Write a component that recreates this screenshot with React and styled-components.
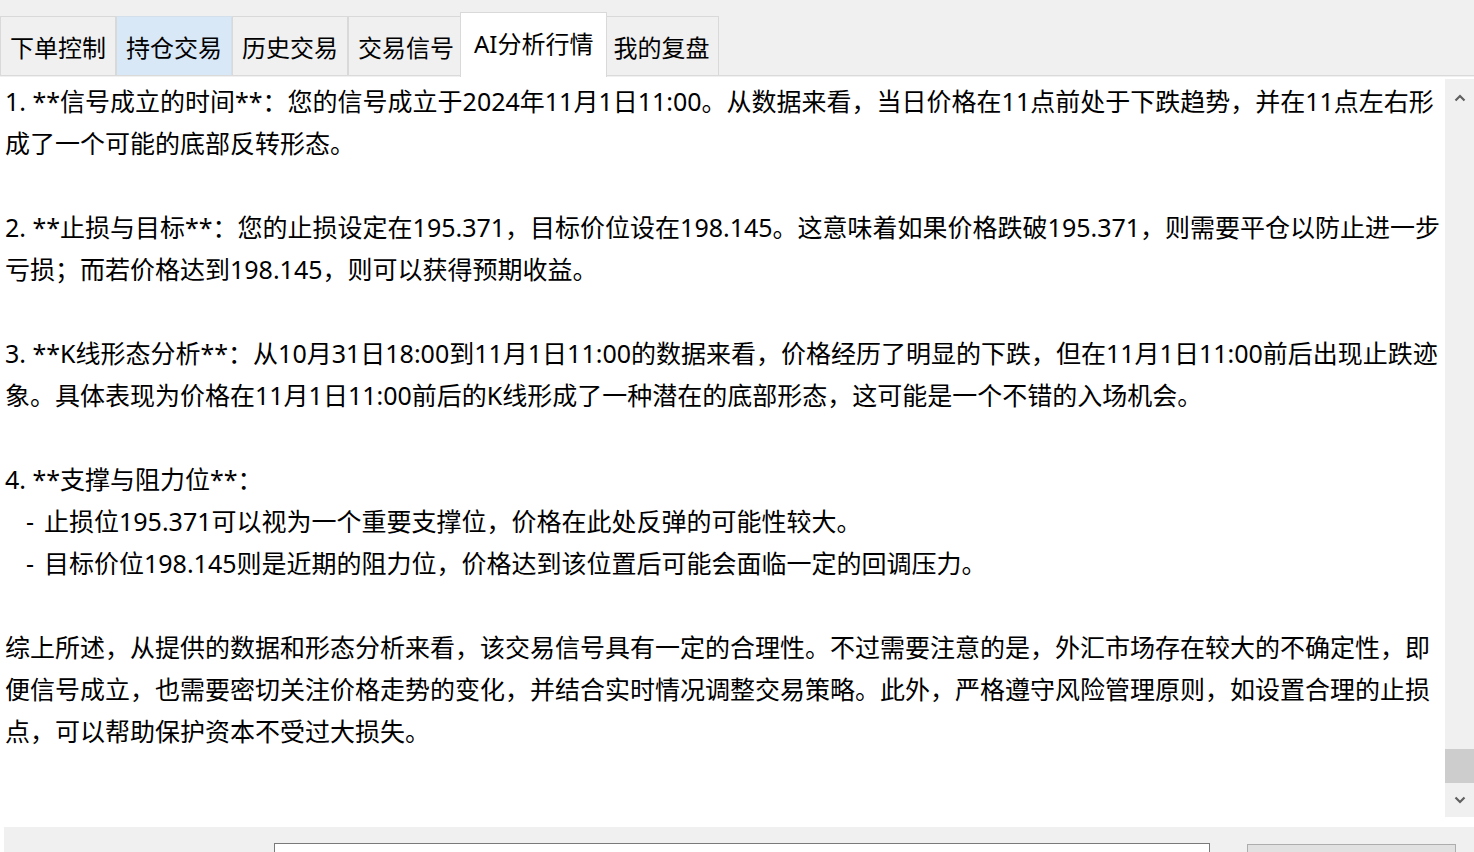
import React from "react";
import styled, { createGlobalStyle } from "styled-components";

const Global = createGlobalStyle`
  html, body { margin: 0; padding: 0; background: #ffffff; }
  body { font-family: "Noto Sans", "Noto Sans CJK SC", sans-serif; overflow: hidden; }
  #root { width: 1474px; height: 852px; }
`;

const Page = styled.div`
  width: 1474px;
  height: 852px;
  display: flex;
  flex-direction: column;
  background: #ffffff;
  overflow: hidden;
  & > * { flex-shrink: 0; }
`;

const TabBar = styled.div`
  height: 77px;
  box-sizing: border-box;
  background: #f0f0f0;
  display: flex;
  align-items: flex-end;
  position: relative;
  &::after {
    content: "";
    position: absolute;
    left: 0;
    right: 0;
    bottom: 1px;
    height: 1px;
    background: #dadada;
  }
`;

const Tab = styled.div`
  position: relative;
  z-index: ${(p) => (p.$active ? 2 : 1)};
  box-sizing: border-box;
  height: ${(p) => (p.$active ? "65px" : "60px")};
  margin: ${(p) => (p.$active ? "0 -4px 0 -4px" : "0 0 1px 0")};
  padding: ${(p) => (p.$active ? "0 13px 6px" : "0 9px")};
  display: flex;
  align-items: center;
  font-size: 24px;
  color: #000;
  white-space: nowrap;
  background: ${(p) => (p.$active ? "#ffffff" : p.$hover ? "#d9e8f6" : "#f0f0f0")};
  border: 1px solid ${(p) => (p.$hover ? "#d3dfeb" : "#d9d9d9")};
  border-bottom: ${(p) => (p.$active ? "none" : "1px solid #dadada")};
  & + & { border-left: ${(p) => (p.$active ? "1px solid #d9d9d9" : "none")}; }
`;

const Body = styled.div`
  height: 740px;
  display: flex;
  background: #ffffff;
`;

const TextArea = styled.div`
  flex: 1;
  padding: 3px 0 0 5px;
  font-size: 25px;
  line-height: 42px;
  color: #000;
  overflow: hidden;
`;

const Line = styled.div`
  white-space: pre;
  height: 42px;
  padding-left: ${(p) => (p.$indent ? "21px" : "0")};
`;

const Dash = styled.span`
  display: inline-block;
  width: 18px;
`;

const ScrollBar = styled.div`
  width: 29px;
  margin-top: 2px;
  background: #f0f0f0;
  display: flex;
  flex-direction: column;
`;

const Arrow = styled.div`
  height: ${(p) => (p.$up ? "38px" : "34px")};
  display: flex;
  align-items: center;
  justify-content: center;
`;

const Track = styled.div`
  flex: 1;
  display: flex;
  flex-direction: column;
  justify-content: flex-end;
`;

const Thumb = styled.div`
  height: 34px;
  background: #cdcdcd;
`;

const Gap = styled.div`
  height: 10px;
  background: #ffffff;
`;

const Bottom = styled.div`
  height: 25px;
  margin-left: 4px;
  background: #f0f0f0;
  display: flex;
  align-items: flex-start;
  padding-top: 16px;
  overflow: hidden;
`;

const Input = styled.div`
  flex-shrink: 0;
  margin-left: 270px;
  width: 936px;
  height: 40px;
  box-sizing: border-box;
  border: 1px solid #7a7a7a;
  background: #ffffff;
`;

const Button = styled.div`
  flex-shrink: 0;
  margin-left: 37px;
  margin-top: 1px;
  width: 209px;
  height: 40px;
  box-sizing: border-box;
  border: 1px solid #adadad;
  background: #e1e1e1;
`;

const lines = [
  "1. **信号成立的时间**：您的信号成立于2024年11月1日11:00。从数据来看，当日价格在11点前处于下跌趋势，并在11点左右形",
  "成了一个可能的底部反转形态。",
  "",
  "2. **止损与目标**：您的止损设定在195.371，目标价位设在198.145。这意味着如果价格跌破195.371，则需要平仓以防止进一步",
  "亏损；而若价格达到198.145，则可以获得预期收益。",
  "",
  "3. **K线形态分析**：从10月31日18:00到11月1日11:00的数据来看，价格经历了明显的下跌，但在11月1日11:00前后出现止跌迹",
  "象。具体表现为价格在11月1日11:00前后的K线形成了一种潜在的底部形态，这可能是一个不错的入场机会。",
  "",
  "4. **支撑与阻力位**：",
  { sub: "止损位195.371可以视为一个重要支撑位，价格在此处反弹的可能性较大。" },
  { sub: "目标价位198.145则是近期的阻力位，价格达到该位置后可能会面临一定的回调压力。" },
  "",
  "综上所述，从提供的数据和形态分析来看，该交易信号具有一定的合理性。不过需要注意的是，外汇市场存在较大的不确定性，即",
  "便信号成立，也需要密切关注价格走势的变化，并结合实时情况调整交易策略。此外，严格遵守风险管理原则，如设置合理的止损",
  "点，可以帮助保护资本不受过大损失。",
];

const tabs = ["下单控制", "持仓交易", "历史交易", "交易信号", "AI分析行情", "我的复盘"];

const Chevron = ({ up }) => (
  <svg width="12" height="8" viewBox="0 0 12 8">
    <path
      d={up ? "M1.5 6.5 L6 2 L10.5 6.5" : "M1.5 1.5 L6 6 L10.5 1.5"}
      fill="none"
      stroke="#606060"
      strokeWidth="2.2"
    />
  </svg>
);

export default function App() {
  return (
    <Page>
      <Global />
      <TabBar>
        {tabs.map((t, i) => (
          <Tab key={t} $active={i === 4} $hover={i === 1}>
            {t}
          </Tab>
        ))}
      </TabBar>
      <Body>
        <TextArea>
          {lines.map((l, i) =>
            typeof l === "string" ? (
              <Line key={i}>{l}</Line>
            ) : (
              <Line key={i} $indent>
                <Dash>-</Dash>
                {l.sub}
              </Line>
            )
          )}
        </TextArea>
        <ScrollBar>
          <Arrow $up>
            <Chevron up />
          </Arrow>
          <Track>
            <Thumb />
          </Track>
          <Arrow>
            <Chevron />
          </Arrow>
        </ScrollBar>
      </Body>
      <Gap />
      <Bottom>
        <Input />
        <Button />
      </Bottom>
    </Page>
  );
}
